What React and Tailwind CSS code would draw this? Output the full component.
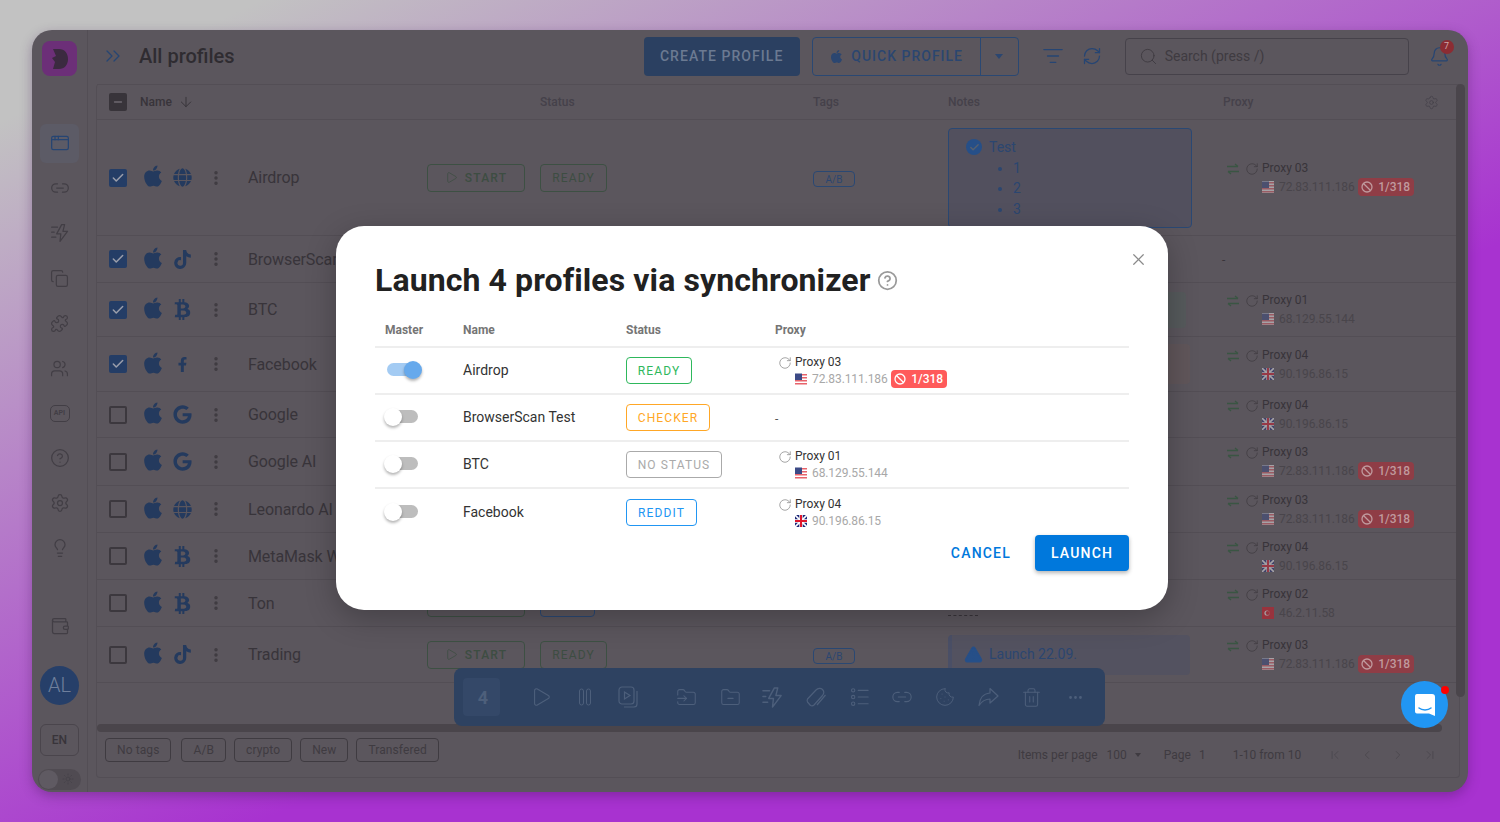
import React from 'react';
import {
  AppWindow, ArrowDown, Ban, Bell, ChevronLeft, ChevronRight, ChevronsRight, CircleHelp, ChevronFirst, ChevronLast,
  Cookie, Copy, Ellipsis, FolderInput, FolderMinus, Lightbulb, Play, Puzzle, RefreshCw, RotateCw, Search, Settings, Sun,
  Trash2, Users, Wallet, X, Check, Minus, TriangleAlert, ListFilter, EllipsisVertical, Link2,
} from 'lucide-react';
import { FaApple, FaBtc, FaFacebookF, FaGlobe, FaGoogle, FaTiktok } from 'react-icons/fa';

// rows 2-8 sit behind the dialog, so only their visible cells are filled in
const rows = [
  { name: 'Airdrop', icon: 'globe', checked: true, h: 'h-[116px]', proxy: 'Proxy 03', ip: '72.83.111.186', flag: 'us', bad: true, note: 'list', start: 'full' },
  { name: 'BrowserScan Test', icon: 'tiktok', checked: true, h: 'h-[47px]' },
  { name: 'BTC', icon: 'btc', checked: true, h: 'h-[54px]', proxy: 'Proxy 01', ip: '68.129.55.144', flag: 'us', note: 'green' },
  { name: 'Facebook', icon: 'fb', checked: true, h: 'h-[55px]', proxy: 'Proxy 04', ip: '90.196.86.15', flag: 'uk', note: 'red' },
  { name: 'Google', icon: 'google', h: 'h-[46px]', proxy: 'Proxy 04', ip: '90.196.86.15', flag: 'uk' },
  { name: 'Google AI', icon: 'google', h: 'h-[48px]', proxy: 'Proxy 03', ip: '72.83.111.186', flag: 'us', bad: true },
  { name: 'Leonardo AI', icon: 'globe', h: 'h-[47px]', proxy: 'Proxy 03', ip: '72.83.111.186', flag: 'us', bad: true },
  { name: 'MetaMask Wallet', icon: 'btc', h: 'h-[47px]', proxy: 'Proxy 04', ip: '90.196.86.15', flag: 'uk' },
  { name: 'Ton', icon: 'btc', h: 'h-[47px]', proxy: 'Proxy 02', ip: '46.2.11.58', flag: 'tr', note: 'dash', start: 'empty' },
  { name: 'Trading', icon: 'tiktok', h: 'h-[56px]', proxy: 'Proxy 03', ip: '72.83.111.186', flag: 'us', bad: true, note: 'warn', start: 'full' },
];

function Flag({ type, dim }) {
  return (
    <svg width="12" height="12" viewBox="0 0 12 12" className={`shrink-0 ${dim ? 'opacity-45' : ''}`}>
      {type === 'us' && (
        <>
          <rect width="12" height="12" fill="#fff" />
          <rect y="1" width="12" height="1.5" fill="#e8636b" />
          <rect y="4" width="12" height="1.5" fill="#e8636b" />
          <rect y="7" width="12" height="1.5" fill="#e8636b" />
          <rect y="10" width="12" height="1.5" fill="#e8636b" />
          <rect width="7" height="6.5" y="0.5" fill="#3c4a86" />
        </>
      )}
      {type === 'uk' && (
        <>
          <rect width="12" height="12" fill="#1f2a7a" />
          <path d="M0 0L12 12M12 0L0 12" stroke="#fff" strokeWidth="1.6" />
          <path d="M6 0V12M0 6H12" stroke="#fff" strokeWidth="3.4" />
          <path d="M6 0V12M0 6H12" stroke="#e0162b" strokeWidth="2" />
        </>
      )}
      {type === 'tr' && (
        <>
          <rect width="12" height="12" fill="#e30a17" />
          <circle cx="5" cy="6" r="2.6" fill="#fff" />
          <circle cx="5.7" cy="6" r="2.1" fill="#e30a17" />
        </>
      )}
    </svg>
  );
}

function SecondIcon({ type }) {
  const c = 'text-[#243a5e]';
  if (type === 'globe') return <FaGlobe size={19} className={c} />;
  if (type === 'tiktok') return <FaTiktok size={19} className={c} />;
  if (type === 'btc') return <FaBtc size={21} className={c} />;
  if (type === 'fb') return <FaFacebookF size={15} className={c} />;
  return <FaGoogle size={19} className={c} />;
}

function Swap() {
  return (
    <svg width="12" height="12" viewBox="0 0 12 12" fill="none" stroke="#3a5543" strokeWidth="1.3" className="mt-[3px] mr-[7px] shrink-0">
      <path d="M0 3.5H11M8 1L11 3.5" />
      <path d="M12 8.5H1M4 11L1 8.5" />
    </svg>
  );
}

function BoltLines({ size = 20, className = '' }) {
  return (
    <svg width={size} height={size} viewBox="0 0 24 24" fill="none" stroke="currentColor" strokeWidth="1.5" strokeLinejoin="round" strokeLinecap="round" className={className}>
      <path d="M14 2 L8 13 H13 L12 22 L21 10 H15.5 L17.5 2 Z" />
      <path d="M2 5H9M2 11H5M2 17H7" />
    </svg>
  );
}

function ListIcon({ size = 20, className = '' }) {
  return (
    <svg width={size} height={size} viewBox="0 0 24 24" fill="none" stroke="currentColor" strokeWidth="1.3" strokeLinecap="round" className={className}>
      <circle cx="5" cy="4" r="2" /><circle cx="5" cy="12" r="2" /><circle cx="5" cy="20" r="2" />
      <path d="M11 4H23M11 12H23M11 20H23" />
    </svg>
  );
}

function Note({ type }) {
  if (type === 'list') {
    return (
      <div className="w-[244px] h-[100px] bg-[#52505e] border border-[#2a4873] rounded-[4px] pt-[8px] pl-[17px] text-[14px] text-[#2b4670]">
        <div className="flex items-center gap-[7px]">
          <span className="w-[16px] h-[16px] rounded-full bg-[#264f88] flex items-center justify-center">
            <Check size={11} strokeWidth={3} className="text-[#56606f]" />
          </span>
          Test
        </div>
        <ul className="list-disc pl-[47px] leading-[20.5px]">
          <li>1</li>
          <li>2</li>
          <li>3</li>
        </ul>
      </div>
    );
  }
  if (type === 'green') return <div className="w-[238px] h-[36px] bg-[#565a5c] rounded-[4px]" />;
  if (type === 'red') return <div className="w-[242px] h-[40px] bg-[#60565a] rounded-[4px]" />;
  if (type === 'warn') {
    return (
      <div className="w-[242px] h-[40px] bg-[#535260] border-l-[4px] border-[#4a4f66] rounded-[4px] flex items-center gap-[6px] pl-[12px] text-[14px] text-[#2b4670]">
        <TriangleAlert size={19} fill="#264f88" className="text-[#264f88]" />
        Launch 22.09.
      </div>
    );
  }
  if (type === 'dash') return <div className="w-[30px] self-end border-b border-dashed border-[#38343a] mb-[10px]" />;
  return null;
}

function ProxyCell({ row, modal }) {
  if (!row.proxy) {
    return <span className={`text-[12px] ${modal ? 'text-[#555]' : 'text-[#38343a] -ml-[5px]'}`}>-</span>;
  }
  return (
    <div className="flex items-start pt-[1px]">
      {!modal && <Swap />}
      <RotateCw size={14} strokeWidth={1.3} className={`mt-[2px] mr-[3px] ${modal ? 'text-[#8a8a8a] ml-[3px]' : 'text-[#3f3b41] -ml-[1px]'}`} />
      <div className="text-[12px] leading-[16px]">
        <div className={modal ? 'text-[#333]' : 'text-[#38343a]'}>{row.proxy}</div>
        <div className={`flex items-center h-[18px] ${modal ? '' : 'mt-[2px]'}`}>
          <Flag type={row.flag} dim={!modal} />
          <span className={`ml-[5px] tracking-[-0.1px] ${modal ? 'text-[#a8a8a8]' : 'text-[#49454b]'}`}>{row.ip}</span>
          {row.bad && (
            <span className={`ml-[3px] h-[18px] w-[56px] rounded-[4px] flex items-center justify-center gap-[5px] font-medium ${modal ? 'bg-[#ff5a5a] text-white' : 'bg-[#8f3d46] text-[#c09a9e]'}`}>
              <Ban size={12} strokeWidth={2.6} />1/318
            </span>
          )}
        </div>
      </div>
    </div>
  );
}

function Row({ row }) {
  return (
    <div className={`${row.h} grid grid-cols-[151px_179px_113px_273px_135px_279px_1fr] items-center border-b border-[#534e55]`}>
      <div className="flex items-center pl-[12px]">
        {row.checked ? (
          <span className="w-[18px] h-[18px] rounded-[2px] bg-[#243d66] flex items-center justify-center">
            <Check size={14} strokeWidth={2.6} className="text-[#9a9eab]" />
          </span>
        ) : (
          <span className="w-[18px] h-[18px] rounded-[2px] border-2 border-[#3c383e]" />
        )}
        <FaApple size={24} className="ml-[14px] text-[#243a5e] -mt-[3px]" />
        <span className="w-[30px] ml-[2px] flex justify-center -mr-[3px]"><SecondIcon type={row.icon} /></span>
        <EllipsisVertical size={18} strokeWidth={2.6} className="ml-[13px] text-[#3f3b41]" />
      </div>
      <div className="pt-[1px] text-[16px] tracking-[-0.1px] text-[#38343a] whitespace-nowrap">{row.name}</div>
      <div>
        {row.start && (
          <span className="w-[98px] h-[28px] rounded-[4px] border border-[#3d5043] flex items-center justify-center gap-[7px] text-[12px] font-medium tracking-[1.2px] text-[#3d4d42]">
            {row.start === 'full' && <><Play size={13} strokeWidth={1.5} />START</>}
          </span>
        )}
      </div>
      <div>
        {row.start === 'full' && (
          <span className="inline-flex h-[28px] w-[67px] rounded-[4px] border border-[#3d5043] text-[#3d4d42] items-center justify-center text-[12px] tracking-[1.1px]">READY</span>
        )}
        {row.start === 'empty' && <span className="block h-[28px] w-[55px] rounded-[4px] border border-[#2a4873]" />}
      </div>
      <div>
        {row.start && (
          <span className={`inline-flex h-[16px] rounded-[4px] border border-[#2a4873] items-center justify-center text-[10px] text-[#2b4670] ${row.start === 'full' ? 'w-[42px]' : 'w-[51px]'}`}>
            {row.start === 'full' && 'A/B'}
          </span>
        )}
      </div>
      <div className="h-full flex items-center"><Note type={row.note} /></div>
      <div><ProxyCell row={row} /></div>
    </div>
  );
}

function SideIcon({ children, active }) {
  return (
    <div className="h-[45px] flex items-center justify-center">
      <div className={`w-[39px] h-[39px] rounded-[6px] flex items-center justify-center ${active ? 'bg-[#5c5b66] text-[#264573]' : 'text-[#423e45]'}`}>{children}</div>
    </div>
  );
}

const modalRows = [
  { ...rows[0], chip: 'READY', chipClass: 'border-[#2eb85c] text-[#2eb85c] w-[66px]', on: true },
  { ...rows[1], chip: 'CHECKER', chipClass: 'border-[#ffa726] text-[#ffa726] w-[84px]' },
  { ...rows[2], chip: 'NO STATUS', chipClass: 'border-[#aaaaaa] text-[#aaaaaa] w-[96px]' },
  { ...rows[3], chip: 'REDDIT', chipClass: 'border-[#2196f3] text-[#2196f3] w-[71px]', last: true },
];

const tags = ['No tags', 'A/B', 'crypto', 'New', 'Transfered'];

export default function App() {
  return (
    <div className="h-[822px] w-[1500px] overflow-hidden bg-[linear-gradient(155deg,#c2c2c2_8%,#a832d0_62%)] px-[32px] pt-[30px] font-['Roboto',sans-serif]">
      <div className="relative h-[762px] w-[1436px] rounded-[20px] bg-[#5b565d] shadow-[0_4px_12px_rgba(60,20,80,0.35)] flex">
        {/* sidebar */}
        <aside className="w-[56px] shrink-0 border-r border-[#534e55] flex flex-col items-center pt-[11px] pb-[2px]">
          <div className="w-[35px] h-[35px] rounded-[8px] bg-[#6c2f78] flex items-center justify-center shrink-0">
            <svg width="16" height="20" viewBox="0 0 16 20"><path d="M1 0H7C12.5 0 16 4 16 10S12.5 20 7 20H1L3 13L0 9L4 7L1 0Z" fill="#3b2a40" /></svg>
          </div>
          <div className="w-full mt-[44.5px]">
            <SideIcon active><AppWindow size={20} strokeWidth={1.5} /></SideIcon>
            <SideIcon><Link2 size={20} strokeWidth={1.5} /></SideIcon>
            <SideIcon><BoltLines /></SideIcon>
            <SideIcon><Copy size={19} strokeWidth={1.5} /></SideIcon>
            <SideIcon><Puzzle size={19} strokeWidth={1.5} /></SideIcon>
            <SideIcon><Users size={19} strokeWidth={1.5} /></SideIcon>
            <SideIcon>
              <span className="w-[20px] h-[17px] rounded-[5px] border border-[#423e45] flex items-center justify-center text-[7px] font-bold">API</span>
            </SideIcon>
            <SideIcon><CircleHelp size={20} strokeWidth={1.5} /></SideIcon>
            <SideIcon><Settings size={20} strokeWidth={1.5} /></SideIcon>
            <SideIcon><Lightbulb size={20} strokeWidth={1.5} /></SideIcon>
          </div>
          <div className="mt-[33px]"><SideIcon><Wallet size={20} strokeWidth={1.5} /></SideIcon></div>
          <div className="w-[39px] h-[39px] rounded-full bg-[#263f69] flex items-center justify-center text-[20px] font-light text-[#6f7f9c] mt-[17px] shrink-0">AL</div>
          <div className="w-[39px] h-[32px] rounded-[6px] border border-[#4a454c] flex items-center justify-center text-[12px] font-medium text-[#38343a] mt-[19px] shrink-0">EN</div>
          <div className="w-[43px] h-[21px] rounded-full bg-[#504b52] flex items-center mt-[13px] pl-[1px] shrink-0">
            <span className="w-[19px] h-[19px] rounded-full bg-[#5f5a62]" />
            <Sun size={12} className="ml-[4px] text-[#47434a]" />
          </div>
        </aside>

        {/* main */}
        <div className="flex-1 min-w-0 flex flex-col">
          <header className="h-[54px] pb-[2px] shrink-0 flex items-center">
            <ChevronsRight size={24} strokeWidth={1.3} className="ml-[13px] text-[#264573]" />
            <h1 className="ml-[14px] text-[20px] font-medium text-[#2f2c31]">All profiles</h1>
            <button className="ml-[409px] w-[156px] h-[39px] rounded-[4px] bg-[#2b4061] text-[14px] font-medium tracking-[1.05px] text-[#6b7a92]">CREATE PROFILE</button>
            <div className="ml-[12px] w-[207px] h-[39px] rounded-[4px] border border-[#2a4873] flex items-center text-[#2b4670]">
              <div className="w-[167px] flex items-center justify-center gap-[7px] text-[14px] font-medium tracking-[1px]">
                <FaApple size={15} />QUICK PROFILE
              </div>
              <div className="flex-1 h-full border-l border-[#2a4873] flex items-center justify-center">
                <span className="w-0 h-0 border-x-[4px] border-x-transparent border-t-[5px] border-t-[#2b4670]" />
              </div>
            </div>
            <ListFilter size={22} strokeWidth={1.4} className="ml-[23px] text-[#264573]" />
            <RefreshCw size={20} strokeWidth={1.5} className="ml-[18px] text-[#264573]" />
            <div className="ml-[23px] w-[284px] h-[37px] rounded-[4px] border border-[#46424a] flex items-center pl-[13px] gap-[7px] text-[14px] text-[#3f3b41]">
              <Search size={19} strokeWidth={1.2} />Search (press /)
            </div>
            <div className="relative ml-[20px]">
              <Bell size={21} strokeWidth={1.4} className="text-[#264573]" />
              <span className="absolute -top-[6px] right-[-4px] w-[14px] h-[14px] rounded-full bg-[#8c2c33] flex items-center justify-center text-[9px] text-[#cfa8aa]">7</span>
            </div>
          </header>

          <div className="mx-[8px] mb-[14px] flex-1 min-h-0 flex flex-col border border-[#534e55] rounded-[4px] border-t-0">
            <div className="h-[36px] shrink-0 grid grid-cols-[151px_179px_113px_273px_135px_275px_1fr] items-center border-b border-t border-[#534e55] text-[12px] font-medium text-[#45414a]">
              <div className="flex items-center pl-[12px] text-[#38343a]">
                <span className="w-[18px] h-[18px] rounded-[2px] bg-[#38343a] flex items-center justify-center">
                  <Minus size={12} strokeWidth={2.6} className="text-[#6d6870]" />
                </span>
                <span className="ml-[13px]">Name</span>
                <ArrowDown size={16} strokeWidth={1.5} className="ml-[6px]" />
              </div>
              <div />
              <div />
              <div>Status</div>
              <div>Tags</div>
              <div>Notes</div>
              <div className="flex items-center justify-between pr-[20px]">
                Proxy<Settings size={15} strokeWidth={1.3} />
              </div>
            </div>
            <div className="flex-1 min-h-0">
              {rows.map((r) => <Row key={r.name} row={r} />)}
            </div>
            <div className="h-[8px] mr-[17px] rounded-full bg-[#4a454b] shrink-0" />
            <div className="h-[45px] shrink-0 flex items-center pl-[8px] text-[12px] text-[#3f3b41]">
              <div className="flex self-start mt-[6px] tracking-[0.1px]">
                {tags.map((t, i) => (
                  <span key={t} className={`h-[24px] rounded-[4px] border border-[#3f3b41] flex items-center px-[11px] ${i === 0 ? 'mr-[10px]' : 'mr-[8px]'}`}>{t}</span>
                ))}
              </div>
              <span className="ml-[571px]">Items per page</span>
              <span className="ml-[9px]">100</span>
              <span className="ml-[8px] w-0 h-0 border-x-[3.5px] border-x-transparent border-t-[4px] border-t-[#3f3b41]" />
              <span className="ml-[23px]">Page</span>
              <span className="ml-[8px]">1</span>
              <span className="ml-[27px]">1-10 from 10</span>
              <ChevronFirst size={14} strokeWidth={1.4} className="ml-[27px] text-[#4a464c]" />
              <ChevronLeft size={14} strokeWidth={1.4} className="ml-[18px] text-[#4a464c]" />
              <ChevronRight size={14} strokeWidth={1.4} className="ml-[17px] text-[#4a464c]" />
              <ChevronLast size={14} strokeWidth={1.4} className="ml-[18px] text-[#4a464c]" />
            </div>
          </div>
        </div>

        {/* vertical scrollbar */}
        <div className="absolute right-[3px] top-[54px] w-[9px] h-[613px] rounded-full bg-[#4a454b]" />

        {/* selection toolbar */}
        <div className="absolute left-[422px] top-[638px] w-[651px] h-[58px] rounded-[8px] bg-[#2e4261] flex items-center pl-[9px] text-[#4d5f7b]">
          <div className="w-[37px] h-[38px] rounded-[4px] bg-[#344868] flex items-center justify-center text-[18px] font-bold pl-[3px]">4</div>
          <Play size={22} strokeWidth={1.2} className="ml-[30px]" />
          <svg width="12" height="18" viewBox="0 0 12 18" fill="none" stroke="currentColor" strokeWidth="1" className="ml-[27px]">
            <rect x="0.5" y="1" width="4" height="16" rx="2" /><rect x="7.5" y="1" width="4" height="16" rx="2" />
          </svg>
          <svg width="20" height="22" viewBox="0 0 20 22" fill="none" stroke="currentColor" strokeWidth="1.2" className="ml-[27px]">
            <rect x="1" y="1" width="15" height="17" rx="3" />
            <path d="M19 5V18C19 20 18 21 16 21H6" />
            <path d="M6.5 6L12 9.5L6.5 13Z" />
          </svg>
          <FolderInput size={21} strokeWidth={1.2} className="ml-[38px]" />
          <FolderMinus size={21} strokeWidth={1.2} className="ml-[23px]" />
          <BoltLines size={23} className="ml-[20px]" />
          <svg width="21" height="21" viewBox="0 0 21 21" fill="none" stroke="currentColor" strokeWidth="1.2" strokeLinejoin="round" className="ml-[22px]">
            <path d="M1.5 12L10 3C12 1 15 1 16.5 2.5C18 4 18 6.5 16.5 8.5L8 18C7 19 5.5 19 4.5 18.5L1.5 15C1 14 1 13 1.5 12Z" />
            <path d="M19.5 8L11 18" />
          </svg>
          <ListIcon size={20} className="ml-[22px]" />
          <Link2 size={22} strokeWidth={1.2} className="ml-[22px]" />
          <Cookie size={20} strokeWidth={1.2} className="ml-[22px]" />
          <svg width="21" height="20" viewBox="0 0 21 20" fill="none" stroke="currentColor" strokeWidth="1.2" strokeLinejoin="round" className="ml-[23px]">
            <path d="M12 1.5L20 9L12 16V12C7 12 4 14 1 18.5C1.5 12 5 6.5 12 6Z" />
          </svg>
          <Trash2 size={21} strokeWidth={1.2} className="ml-[22px]" />
          <Ellipsis size={17} className="ml-[25px]" />
        </div>

        {/* chat launcher */}
        <div className="absolute left-[1369px] top-[651px] w-[47px] h-[47px] rounded-full bg-[#2196f3] flex items-center justify-center">
          <svg width="22" height="24" viewBox="0 0 22 24">
            <path d="M3 1H18C20 1 21 2 21 4V23L15 20.5H3C1.5 20.5 1 19.5 1 18V4C1 2 1.5 1 3 1Z" fill="#fff" />
            <path d="M5 15C8 17.5 14 17.5 17 15" stroke="#2196f3" strokeWidth="1.5" fill="none" strokeLinecap="round" />
          </svg>
          <span className="absolute right-[-0.5px] top-[5px] w-[8px] h-[8px] rounded-full bg-[#ff0000]" />
        </div>

        {/* launch dialog */}
        <div className="absolute left-[304px] top-[196px] w-[832px] h-[384px] rounded-[28px] bg-white px-[39px] shadow-[0_8px_30px_rgba(0,0,0,0.25)]">
          <X size={19} strokeWidth={1.5} className="absolute right-[20px] top-[24px] text-[#8a8a8a]" />
          <div className="flex items-center h-[38px] mt-[35px]">
            <h2 className="text-[32px] font-bold tracking-[0.1px] text-[#212121] leading-none whitespace-nowrap">Launch 4 profiles via synchronizer</h2>
            <CircleHelp size={21} strokeWidth={2} className="ml-[7px] text-[#9a9a9a]" />
          </div>
          <div className="mt-[19px] w-[754px]">
            <div className="h-[30px] grid grid-cols-[88px_163px_149px_1fr] items-center border-b-2 border-[#eeeeee] text-[12px] font-bold text-[#757575] pb-[4px]">
              <div className="pl-[10px]">Master</div>
              <div>Name</div>
              <div>Status</div>
              <div>Proxy</div>
            </div>
            {modalRows.map((r) => (
              <div key={r.name} className={`h-[47px] grid grid-cols-[88px_163px_149px_1fr] items-center ${r.last ? '' : 'border-b-2 border-[#eeeeee]'}`}>
                <div className="relative h-[18px] ml-[9px] -mt-[2px]">
                  <span className={`absolute left-[3px] top-[2.5px] w-[31px] h-[13px] rounded-full ${r.on ? 'bg-[#a3cbf3]' : 'bg-[#bdbdbd]'}`} />
                  <span className={`absolute top-0 w-[18px] h-[18px] rounded-full shadow-[0_2px_3px_rgba(0,0,0,0.3)] ${r.on ? 'left-[20px] bg-[#66a9ec]' : 'left-0 bg-white'}`} />
                </div>
                <div className="text-[14px] text-[#333]">{r.name}</div>
                <div>
                  <span className={`h-[27px] rounded-[4px] border inline-flex items-center justify-center text-[12px] tracking-[1.1px] ${r.chipClass}`}>{r.chip}</span>
                </div>
                <div><ProxyCell row={r} modal /></div>
              </div>
            ))}
            <div className="flex items-center justify-end -mt-[1px]">
              <span className="text-[14px] font-medium tracking-[1.2px] text-[#0078dc] mr-[24px]">CANCEL</span>
              <button className="w-[94px] h-[36px] rounded-[4px] bg-[#0078dc] text-white text-[14px] font-medium tracking-[1.2px] shadow-[0_2px_4px_rgba(0,0,0,0.3)]">LAUNCH</button>
            </div>
          </div>
        </div>
      </div>
    </div>
  );
}
